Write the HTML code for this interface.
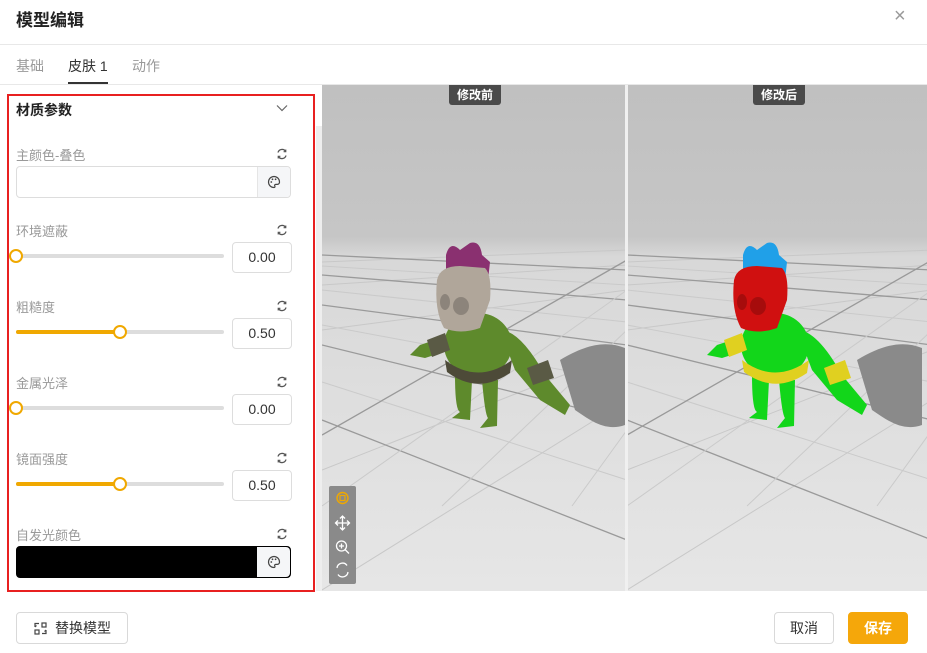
<!DOCTYPE html>
<html><head><meta charset="utf-8"><style>
*{margin:0;padding:0;box-sizing:border-box}
body{width:927px;height:653px;background:#fff;font-family:"Liberation Sans","Noto Sans CJK SC",sans-serif;position:relative;overflow:hidden;color:#333}
.a{position:absolute}
.lbl{position:absolute;left:16px;font-size:13px;color:#999}
.rst{position:absolute;left:276px}
.inp{position:absolute;border:1px solid #ddd;border-radius:4px;background:#fff}
.pal{position:absolute;right:0;top:0;bottom:0;width:33px;background:#f5f6f8;border-left:1px solid #e5e5e5;border-radius:0 4px 4px 0;display:flex;align-items:center;justify-content:center}
.track{position:absolute;left:16px;width:208px;height:4px;background:#ddd;border-radius:2px}
.fill{position:absolute;left:0;top:0;height:4px;background:#f0a800;border-radius:2px}
.knob{position:absolute;width:14px;height:14px;border:2px solid #f0a800;background:#fff;border-radius:50%;top:-5px}
.num{position:absolute;left:232px;width:60px;height:31px;border:1px solid #ddd;border-radius:4px;font-size:14px;color:#333;text-align:center;line-height:29px}
.btn{position:absolute;top:612px;height:32px;border:1px solid #d9d9d9;border-radius:4px;font-size:14px;text-align:center;line-height:30px}
.tag{position:absolute;top:85px;height:20px;background:#4a4a4a;color:#fff;font-size:12px;font-weight:bold;line-height:20px;padding:0 8px;border-radius:0 0 3px 3px}
</style></head><body>
<svg width="0" height="0" style="position:absolute"><defs>
<symbol id="r" viewBox="0 0 12 12"><path d="M2 4.5A4.2 4.2 0 0 1 9.5 3.2M10 7.5A4.2 4.2 0 0 1 2.5 8.8" fill="none" stroke="#555" stroke-width="1.3"/><path d="M9.8 1.5v2.2H7.6M2.2 10.5V8.3h2.2" fill="none" stroke="#555" stroke-width="1.1"/></symbol>
<symbol id="p" viewBox="0 0 14 14"><path d="M7 1.5a5.5 5.5 0 1 0 0 11c1 0 1.2-.8.8-1.5-.5-.8 0-1.6 1-1.6h1.6A2.2 2.2 0 0 0 12.5 7 5.5 5.5 0 0 0 7 1.5z" fill="none" stroke="#444" stroke-width="1.2"/><circle cx="4.3" cy="7" r=".9" fill="#444"/><circle cx="5.5" cy="4.3" r=".9" fill="#444"/><circle cx="8.6" cy="4.3" r=".9" fill="#444"/></symbol>
</defs></svg>
<div class="a" style="left:16px;top:6px;font-size:17px;font-weight:bold;color:#222">模型编辑</div>
<div class="a" style="left:894px;top:5px;font-size:20px;color:#999">×</div>
<div class="a" style="left:0;top:44px;width:927px;height:1px;background:#e8e8e8"></div>
<div class="a" style="left:16px;top:56px;font-size:14px;color:#999">基础</div>
<div class="a" style="left:68px;top:56px;font-size:14px;color:#333">皮肤 1</div>
<div class="a" style="left:132px;top:56px;font-size:14px;color:#999">动作</div>
<div class="a" style="left:68px;top:82px;width:40px;height:2px;background:#333"></div>
<div class="a" style="left:0;top:84px;width:927px;height:1px;background:#e8e8e8"></div>
<div class="a" style="left:316px;top:126px;width:6px;height:465px;background:#eee"></div>

<div class="a" style="left:7px;top:94px;width:308px;height:498px;border:2px solid #e82020"></div>
<div class="a" style="left:16px;top:100px;font-size:14px;font-weight:bold;color:#222">材质参数</div>
<svg class="a" style="left:276px;top:104px" width="12" height="8"><path d="M1 1.5L6 6.5L11 1.5" fill="none" stroke="#666" stroke-width="1.2"/></svg>

<div class="lbl" style="top:145px">主颜色-叠色</div><svg class="rst" style="top:148px" width="12" height="12"><use href="#r"/></svg>
<div class="inp" style="left:16px;top:166px;width:275px;height:32px"><div class="pal"><svg width="14" height="14"><use href="#p"/></svg></div></div>

<div class="lbl" style="top:221px">环境遮蔽</div><svg class="rst" style="top:224px" width="12" height="12"><use href="#r"/></svg>
<div class="track" style="top:254px"><div class="knob" style="left:-7px"></div></div>
<div class="num" style="top:242px">0.00</div>

<div class="lbl" style="top:297px">粗糙度</div><svg class="rst" style="top:300px" width="12" height="12"><use href="#r"/></svg>
<div class="track" style="top:330px"><div class="fill" style="width:104px"></div><div class="knob" style="left:97px"></div></div>
<div class="num" style="top:318px">0.50</div>

<div class="lbl" style="top:373px">金属光泽</div><svg class="rst" style="top:376px" width="12" height="12"><use href="#r"/></svg>
<div class="track" style="top:406px"><div class="knob" style="left:-7px"></div></div>
<div class="num" style="top:394px">0.00</div>

<div class="lbl" style="top:449px">镜面强度</div><svg class="rst" style="top:452px" width="12" height="12"><use href="#r"/></svg>
<div class="track" style="top:482px"><div class="fill" style="width:104px"></div><div class="knob" style="left:97px"></div></div>
<div class="num" style="top:470px">0.50</div>

<div class="lbl" style="top:525px">自发光颜色</div><svg class="rst" style="top:528px" width="12" height="12"><use href="#r"/></svg>
<div class="inp" style="left:16px;top:546px;width:275px;height:32px;background:#000;border-color:#000"><div class="pal" style="border:none"><svg width="14" height="14"><use href="#p"/></svg></div></div>

<svg class="a" style="left:322px;top:85px" width="605" height="506" viewBox="322 85 605 506">
<defs><linearGradient id="bg" x1="0" y1="0" x2="0" y2="1"><stop offset="0" stop-color="#c0c0c0"/><stop offset=".3" stop-color="#c6c6c6"/><stop offset=".34" stop-color="#d8d8d8"/><stop offset="1" stop-color="#e6e6e6"/></linearGradient>
<g id="grid" fill="none">
<path d="M0 262L305 250M0 285L305 265M0 330L305 290M0 470L305 350M0 590L305 400" stroke="#c8c8c8"/>
<path d="M0 255L305 270M0 275L305 300M0 305L305 345M0 345L305 420M0 420L305 540" stroke="#9a9a9a" stroke-width="1.3"/>
<path d="M0 266L305 285M0 290L305 322M0 325L305 382M0 382L305 480" stroke="#cacaca"/>
<path d="M0 435L305 260" stroke="#999" stroke-width="1.3"/>
<path d="M120 506L305 330M0 506L305 290M250 506L305 430" stroke="#cacaca"/>
</g>
<g id="ch">
<path d="M560 360C585 345 605 340 625 348L625 425C605 432 590 420 575 410Z" fill="#8a8a8a"/>
<path d="M455 375Q455 410 460 412L452 418 470 420 472 380Z" fill="var(--b)"/>
<path d="M482 380Q485 415 488 418L480 428 497 426 498 380Z" fill="var(--b)"/>
<ellipse cx="478" cy="345" rx="34" ry="32" fill="var(--b)"/>
<path d="M445 360Q478 385 512 360L510 373Q478 395 447 372Z" fill="var(--belt)"/>
<path d="M500 330Q520 330 545 375L570 405 565 415 540 400 515 370Z" fill="var(--b)"/>
<path d="M527 368L548 360 554 378 533 385Z" fill="var(--band)"/>
<path d="M450 335L420 345 410 355 425 358 450 350Z" fill="var(--b)"/>
<path d="M427 340L445 333 450 350 432 357Z" fill="var(--band)"/>
<path d="M446 255Q450 240 460 250L470 243Q480 240 482 255L490 262 488 280 446 280Z" fill="var(--hair)"/>
<path d="M437 280Q440 266 460 266L485 268Q492 275 490 300L480 328Q460 335 444 328Q434 310 437 280Z" fill="var(--head)"/>
<ellipse cx="445" cy="302" rx="5" ry="8" fill="rgba(0,0,0,.2)"/>
<ellipse cx="461" cy="306" rx="8" ry="9" fill="rgba(0,0,0,.2)"/>
</g></defs>
<rect x="322" y="85" width="605" height="506" fill="url(#bg)"/>
<use href="#grid" transform="translate(322,0)"/>
<use href="#grid" transform="translate(627,0)"/>
<use href="#ch" style="--b:#5e8a2c;--belt:#4d4a38;--band:#5a5a45;--hair:#8a3070;--head:#b0a69a"/>
<use href="#ch" transform="translate(297,0)" style="--b:#12d61a;--belt:#e0d020;--band:#e0d020;--hair:#20a0e8;--head:#d01010"/>
<rect x="625" y="85" width="3" height="506" fill="#f0f0f0"/>
<rect x="329" y="486" width="27" height="98" rx="2" fill="#8a8a8a"/>
<circle cx="342.5" cy="498" r="5.5" fill="none" stroke="#f0a800" stroke-width="1.4"/><rect x="340" y="495.5" width="5" height="5" fill="none" stroke="#f0a800" stroke-width="1.2"/>
<path d="M342.5 516v14M335.5 523h14M340 518.5l2.5-2.5 2.5 2.5M340 527.5l2.5 2.5 2.5-2.5M338 520.5l-2.5 2.5 2.5 2.5M347 520.5l2.5 2.5-2.5 2.5" fill="none" stroke="#fff" stroke-width="1.3"/>
<circle cx="341.5" cy="546" r="5" fill="none" stroke="#fff" stroke-width="1.3"/><path d="M345 549.5l4 4M339 546h5M341.5 543.5v5" stroke="#fff" stroke-width="1.3"/>
<path d="M337 568a5.5 5.5 0 0 1 10-2.5M348 572a5.5 5.5 0 0 1-10 2.5" fill="none" stroke="#fff" stroke-width="1.3"/>
</svg>
<div class="tag" style="left:449px">修改前</div>
<div class="tag" style="left:753px">修改后</div>

<div class="btn" style="left:16px;width:112px;color:#333"><svg style="position:absolute;left:17px;top:9px" width="13" height="13" viewBox="0 0 13 13" fill="none" stroke="#444" stroke-width="1.2"><path d="M1 5V1.5h4M1 5l1.5-1.5M12 8v3.5H8M12 8l-1.5 1.5"/><rect x="8" y="1" width="4" height="4"/><rect x="1" y="8" width="4" height="4"/></svg><span style="margin-left:22px">替换模型</span></div>
<div class="btn" style="left:774px;width:60px;color:#333">取消</div>
<div class="btn" style="left:848px;width:60px;background:#f5a70a;border-color:#f5a70a;color:#fff;font-weight:bold">保存</div>
</body></html>
